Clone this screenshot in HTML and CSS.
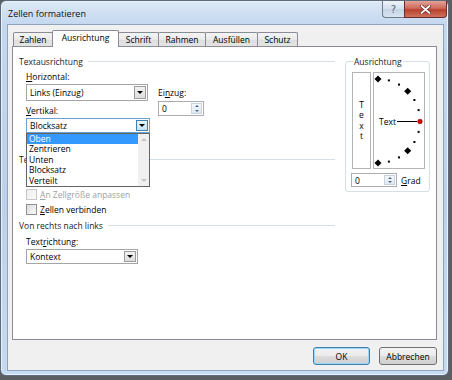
FILE: index.html
```html
<!DOCTYPE html>
<html lang="de">
<head>
    <meta charset="UTF-8">
    <title>Zellen formatieren</title>
    <link rel="stylesheet" href="styles.css">
</head>
<body>
<div class="window">
    <div class="titlebar">
        <span class="title">Zellen formatieren</span>
        <div class="caption-buttons">
            <div class="cap-btn help">?</div>
            <div class="cap-btn close">
                <svg width="11" height="9" viewBox="0 0 11 9">
                    <path d="M1.5 1 L9.5 8 M9.5 1 L1.5 8" stroke="#5a2020" stroke-width="3.2" stroke-linecap="round"/>
                    <path d="M1.5 1 L9.5 8 M9.5 1 L1.5 8" stroke="#fff" stroke-width="1.8" stroke-linecap="round"/>
                </svg>
            </div>
        </div>
    </div>

    <div class="client">
        <div class="tabs">
            <div class="tab" style="width:40px">Zahlen</div>
            <div class="tab active" style="width:67px">Ausrichtung</div>
            <div class="tab" style="width:41px">Schrift</div>
            <div class="tab" style="width:48px">Rahmen</div>
            <div class="tab" style="width:53px">Ausfüllen</div>
            <div class="tab" style="width:41px">Schutz</div>
        </div>

        <div class="panel">
            <div class="left">
                <div class="group-head">Textausrichtung</div>
                <div class="indent">
                    <div class="align-grid">
                        <div class="label"><u>H</u>orizontal:</div>
                        <div class="combo combo-h">
                            <span class="combo-text">Links (Einzug)</span>
                            <span class="drop"><i class="tri"></i></span>
                        </div>
                        <div class="label label-v"><u>V</u>ertikal:</div>
                        <div class="combo-wrap">
                            <div class="combo combo-v">
                                <span class="combo-text">Blocksatz</span>
                                <span class="drop hot"><i class="tri"></i></span>
                            </div>
                            <!-- aufgeklappte Liste liegt über Textsteuerung -->
                            <div class="dropdown">
                                <div class="options">
                                    <div class="opt selected">Oben</div>
                                    <div class="opt">Zentrieren</div>
                                    <div class="opt">Unten</div>
                                    <div class="opt">Blocksatz</div>
                                    <div class="opt">Verteilt</div>
                                </div>
                                <div class="scrollbar">
                                    <i class="sarrow up"></i>
                                    <i class="sarrow down"></i>
                                </div>
                            </div>
                        </div>
                        <div class="einzug">
                            <div class="label">Ei<u>n</u>zug:</div>
                            <div class="spin">
                                <span class="spin-val">0</span>
                                <span class="spin-btns"><i class="sup"></i><i class="sdown"></i></span>
                            </div>
                        </div>
                    </div>
                </div>

                <div class="group-head head-steuer">Te<span class="covered">xtsteuerung</span></div>
                <div class="indent checks">
                    <div class="check"><span class="box"></span></div>
                    <div class="check disabled"><span class="box"></span><span><u>A</u>n Zellgröße anpassen</span></div>
                    <div class="check"><span class="box"></span><span><u>Z</u>ellen verbinden</span></div>
                </div>

                <div class="group-head head-rtl">Von rechts nach links</div>
                <div class="indent">
                    <div class="label label-dir">Text<u>r</u>ichtung:</div>
                    <div class="combo combo-dir">
                        <span class="combo-text">Kontext</span>
                        <span class="drop"><i class="tri"></i></span>
                    </div>
                </div>
            </div>

            <fieldset class="orient">
                <legend>Ausrichtung</legend>
                <div class="orient-boxes">
                    <div class="vtext">
                        <span>T</span><span>e</span><span>x</span><span>t</span>
                    </div>
                    <div class="dial">
                        <svg width="50" height="95" viewBox="0 0 50 95">
                            <!-- Mittelpunkt bei (4,48), Radius 42 -->
                            <g fill="#000">
                                <rect x="1.5" y="3.5" width="5" height="5" transform="rotate(45 4 6)"/>
                                <rect x="31.2" y="15.8" width="5" height="5" transform="rotate(45 33.7 18.3)"/>
                                <rect x="31.2" y="75.2" width="5" height="5" transform="rotate(45 33.7 77.7)"/>
                                <rect x="1.5" y="87.5" width="5" height="5" transform="rotate(45 4 90)"/>
                                <rect x="13.9" y="6.4" width="2" height="2"/>
                                <rect x="24" y="10.6" width="2" height="2"/>
                                <rect x="39.4" y="26" width="2" height="2"/>
                                <rect x="43.6" y="36.1" width="2" height="2"/>
                                <rect x="43.6" y="57.9" width="2" height="2"/>
                                <rect x="39.4" y="68" width="2" height="2"/>
                                <rect x="24" y="83.4" width="2" height="2"/>
                                <rect x="13.9" y="87.6" width="2" height="2"/>
                            </g>
                            <text x="5" y="51.5" class="dial-text">Text</text>
                            <line x1="23" y1="48.5" x2="43" y2="48.5" stroke="#000" stroke-width="1"/>
                            <circle cx="46" cy="48.5" r="2.3" fill="#e00000" stroke="#700" stroke-width="0.6"/>
                        </svg>
                    </div>
                </div>
                <div class="grad-row">
                    <div class="spin spin-grad">
                        <span class="spin-val">0</span>
                        <span class="spin-btns"><i class="sup"></i><i class="sdown"></i></span>
                    </div>
                    <span class="grad-label"><u>G</u>rad</span>
                </div>
            </fieldset>
        </div>

        <div class="buttons">
            <div class="btn default">OK</div>
            <div class="btn">Abbrechen</div>
        </div>
    </div>
</div>
</body>
</html>
```

FILE: styles.css
```css
body {
    margin: 0;
    padding: 0;
    background-color: #5b5f61;
    font-family: 'Open Sans', 'Noto Sans', sans-serif;
    font-size: 8.5px;
    color: #000;
}

.window {
    box-sizing: border-box;
    width: 449px;
    height: 376px;
    border: 1px solid #5d6b7d;
    border-radius: 6px;
    background: linear-gradient(#dde9f6, #c3d7ef 24px, #bcd2ec 200px, #c6daf1);
    padding: 0 4px 4px 6px;
    box-shadow: inset 0 0 0 1px #e9f1fa;
}

.titlebar {
    display: flex;
    align-items: flex-start;
    height: 23px;
    margin-right: -3px;
}

.title {
    margin-top: 7px;
    margin-left: 1px;
    font-size: 9px;
    line-height: 11px;
    color: #111;
}

.caption-buttons {
    display: flex;
    margin-left: auto;
}

.cap-btn {
    box-sizing: border-box;
    height: 17px;
    display: flex;
    align-items: center;
    justify-content: center;
    border: 1px solid #6f7b8b;
    border-top: none;
}

.cap-btn.help {
    width: 22px;
    border-radius: 0 0 0 4px;
    border-right: none;
    background: linear-gradient(#eef3f9, #d3dfec 50%, #c4d3e4 51%, #d9e4f0);
    color: #5a6678;
    font-family: 'DejaVu Sans', sans-serif;
    font-size: 10px;
}

.cap-btn.close {
    width: 43px;
    border-radius: 0 0 4px 0;
    border-color: #6a2c2c;
    background: linear-gradient(#e4a399, #cf6a5a 45%, #b8402e 55%, #d0725c);
}

.client {
    box-sizing: border-box;
    height: 347px;
    border: 1px solid #91a3ba;
    background-color: #f0f0f0;
    padding: 5px 6px 5px 4px;
}

.tabs {
    display: flex;
    align-items: flex-end;
    height: 16px;
    padding-left: 1px;
    position: relative;
    z-index: 2;
}

.tab {
    box-sizing: border-box;
    height: 14px;
    border: 1px solid #898c95;
    border-bottom: none;
    border-radius: 2px 2px 0 0;
    margin-right: -1px;
    background: linear-gradient(#f4f4f4, #e9e9e9 50%, #dddddd 51%, #e4e4e4);
    text-align: center;
    line-height: 13px;
    color: #000;
}

.tab.active {
    height: 17px;
    margin-bottom: -1px;
    background: #fff;
    position: relative;
    z-index: 3;
    line-height: 14px;
}

.panel {
    box-sizing: border-box;
    height: 294px;
    border: 1px solid #898c95;
    background-color: #fff;
    padding: 9px 6px 0 6px;
    display: flex;
    align-items: flex-start;
}

.left {
    width: 316px;
}

.group-head {
    display: flex;
    align-items: center;
    height: 11px;
    line-height: 11px;
    color: #1b1b1b;
}

.group-head::after {
    content: "";
    flex: 1;
    height: 1px;
    margin-left: 5px;
    background-color: #d5dfe5;
}

.covered {
    visibility: hidden;
}

.indent {
    padding-left: 7px;
}

.label {
    line-height: 11px;
    height: 11px;
}

.align-grid {
    display: grid;
    grid-template-columns: 124px auto;
    column-gap: 8px;
    align-items: start;
    padding-top: 4px;
}

.align-grid .combo-h {
    margin-top: 2px;
    width: 122px;
}

.label-v {
    margin-top: 4px;
}

.combo-wrap {
    position: relative;
    margin-top: 2px;
    z-index: 5;
}

.einzug {
    grid-column: 2;
    grid-row: 1 / span 4;
    padding-top: 16px;
}

.einzug .spin {
    margin-top: 3px;
}

.combo {
    box-sizing: border-box;
    height: 15px;
    border: 1px solid #a5a5a5;
    background-color: #fff;
    display: flex;
    align-items: stretch;
}

.combo-h {
    height: 17px;
}

.combo-v {
    width: 124px;
    border-color: #6a9fd0;
}

.combo-dir {
    width: 112px;
    margin-top: 2px;
}

.combo-text {
    flex: 1;
    padding-left: 3px;
    display: flex;
    align-items: center;
}

.drop {
    box-sizing: border-box;
    width: 12px;
    margin: 1px;
    border: 1px solid #9c9c9c;
    background: linear-gradient(#f2f2f2, #dcdcdc);
    display: flex;
    align-items: center;
    justify-content: center;
}

.drop.hot {
    border-color: #3c7fb1;
    background: linear-gradient(#e5f4fc, #c4e5f6);
}

.tri {
    width: 0;
    height: 0;
    border-left: 3px solid transparent;
    border-right: 3px solid transparent;
    border-top: 3px solid #000;
}

.dropdown {
    position: absolute;
    top: 15px;
    left: 0;
    box-sizing: border-box;
    width: 124px;
    height: 54px;
    border: 1px solid #646464;
    background-color: #fff;
    display: flex;
}

.options {
    flex: 1;
}

.opt {
    height: 10.4px;
    line-height: 10.4px;
    padding-left: 2px;
}

.opt.selected {
    background-color: #3399ff;
    color: #fff;
}

.scrollbar {
    width: 11px;
    background-color: #f0f0f0;
    display: flex;
    flex-direction: column;
    justify-content: space-between;
    align-items: center;
    padding: 4px 0;
    box-sizing: border-box;
}

.sarrow {
    width: 0;
    height: 0;
    border-left: 3px solid transparent;
    border-right: 3px solid transparent;
}

.sarrow.up {
    border-bottom: 3px solid #c4c4c4;
}

.sarrow.down {
    border-top: 3px solid #c4c4c4;
}

.spin {
    box-sizing: border-box;
    width: 46px;
    height: 15px;
    border: 1px solid #abadb3;
    background-color: #fff;
    display: flex;
}

.spin-val {
    flex: 1;
    padding-left: 3px;
    display: flex;
    align-items: center;
}

.spin-btns {
    width: 11px;
    margin: 1px;
    display: flex;
    flex-direction: column;
    justify-content: space-around;
    align-items: center;
    background: linear-gradient(#f5f8fb, #dfe7ef);
    border: 1px solid #c9d3de;
    box-sizing: border-box;
}

.sup,
.sdown {
    width: 0;
    height: 0;
    border-left: 2px solid transparent;
    border-right: 2px solid transparent;
}

.sup {
    border-bottom: 2px solid #4d6b8a;
}

.sdown {
    border-top: 2px solid #4d6b8a;
}

.head-steuer {
    margin-top: 21px;
}

.checks {
    padding-top: 8px;
}

.check {
    display: flex;
    align-items: center;
    height: 12px;
    margin-bottom: 3px;
}

.check .box {
    box-sizing: border-box;
    width: 11px;
    height: 11px;
    margin-right: 3px;
    border: 1px solid #8e8f8f;
    background: linear-gradient(135deg, #dcdcdc, #fbfbfb);
}

.check.disabled {
    color: #a0a0a0;
}

.check.disabled .box {
    border-color: #c8c8c8;
    background: linear-gradient(135deg, #eeeeee, #fbfbfb);
}

.head-rtl {
    margin-top: 5px;
}

.label-dir {
    margin-top: 5px;
}

.orient {
    box-sizing: border-box;
    width: 85px;
    margin: 0 0 0 10px;
    padding: 5px 4px 4px 6px;
    border: 1px solid #d5dfe5;
    border-radius: 3px;
    min-width: 0;
}

.orient legend {
    padding: 0 1px;
    margin-left: 1px;
    line-height: 11px;
    color: #1b1b1b;
}

.orient-boxes {
    display: flex;
    gap: 2px;
    height: 97px;
}

.vtext {
    box-sizing: border-box;
    width: 19px;
    border: 1px solid #b4b4b4;
    display: flex;
    flex-direction: column;
    justify-content: center;
    align-items: center;
    line-height: 10.5px;
}

.dial {
    box-sizing: border-box;
    width: 52px;
    border: 1px solid #b4b4b4;
}

.dial svg {
    display: block;
}

.dial-text {
    font-family: 'Open Sans', sans-serif;
    font-size: 8.5px;
    fill: #000;
}

.grad-row {
    display: flex;
    align-items: center;
    margin-top: 4px;
    margin-left: -1px;
}

.spin-grad {
    height: 14px;
}

.grad-label {
    margin-left: 4px;
}

.buttons {
    display: flex;
    justify-content: flex-end;
    gap: 9px;
    margin-top: 7px;
}

.btn {
    box-sizing: border-box;
    width: 58px;
    height: 18px;
    border: 1px solid #707070;
    border-radius: 3px;
    background: linear-gradient(#f2f2f2, #ebebeb 50%, #dddddd 51%, #cfcfcf);
    display: flex;
    align-items: center;
    justify-content: center;
}

.btn.default {
    width: 57px;
    border-color: #3c7fb1;
    box-shadow: inset 0 0 0 1px #9fd5f7;
}
```
